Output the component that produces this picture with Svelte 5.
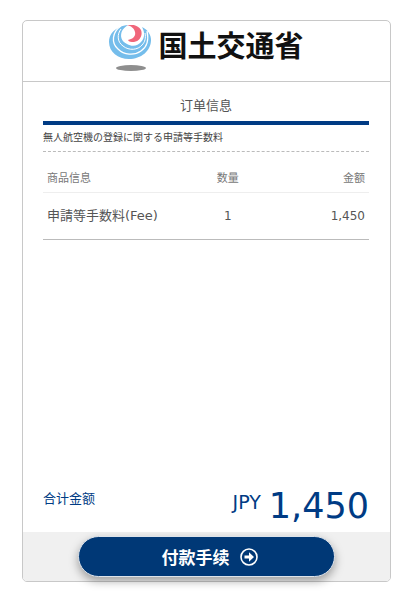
<script>
	let currency = "JPY";
	let subject = "無人航空機の登録に関する申請等手数料";
	let items = [{ name: "申請等手数料(Fee)", quantity: 1, amount: 1450 }];

	let total = items.reduce((sum, item) => sum + item.amount, 0);

	function format(n) {
		return n.toLocaleString("en-US");
	}
</script>

<main class="card">
	<header class="header">
		<svg class="logo" viewBox="0 0 42 47" aria-hidden="true">
			<path
				d="M11 2C4 5 0 10 0 17C0 27 9 34 20 34C32 34 42 26 42 15C42 10 39 5 33 2C36 7 36 13 32 17C29 21 23 22 18 19C12 16 11 11 13 6C14 4 16 2 19 0C16 0 13 1 11 2Z"
				fill="#75bdeb"
			/>
			<path d="M12 1C3 7 2 18 9 24C15 30 25 31 32 26C38 22 40 15 38 6" class="ring" />
			<path d="M12 4C8 9 8 17 14 21C20 26 29 25 33 20C36 17 37 13 36 8" class="ring thin" />
			<path
				d="M18 0C23-1 29 0 32 5C34 10 31 16 25 17C22 17 20 17 19 15C24 14 27 11 26 7C25 3 22 1 18 0Z"
				fill="#f0667a"
			/>
			<ellipse cx="22" cy="43" rx="15" ry="3" fill="#8e8e8e" />
		</svg>
		<span class="ministry">国土交通省</span>
	</header>

	<section class="order">
		<h1>订单信息</h1>
		<p class="subject">{subject}</p>

		<table>
			<thead>
				<tr>
					<th class="name">商品信息</th>
					<th class="quantity">数量</th>
					<th class="amount">金额</th>
				</tr>
			</thead>
			<tbody>
				{#each items as item}
					<tr>
						<td class="name">{item.name}</td>
						<td class="quantity">{item.quantity}</td>
						<td class="amount">{format(item.amount)}</td>
					</tr>
				{/each}
			</tbody>
		</table>

		<div class="total">
			<span class="total-label">合计金额</span>
			<span class="currency">{currency}</span>
			<span class="price">{format(total)}</span>
		</div>
	</section>

	<footer class="footer">
		<button type="button">
			付款手续
			<svg class="arrow" viewBox="0 0 18 18" aria-hidden="true">
				<circle cx="9" cy="9" r="8" fill="none" stroke="#fff" stroke-width="1.6" />
				<path d="M4.5 7.5H9V4.2L14 9L9 13.8V10.5H4.5Z" fill="#fff" />
			</svg>
		</button>
	</footer>
</main>

<style>
	:global(body) {
		background: #fff;
		font-family: "DejaVu Sans", "Noto Sans CJK SC", sans-serif;
	}
	.card {
		display: flex;
		flex-direction: column;
		box-sizing: border-box;
		min-height: calc(100vh - 38px);
		margin: 20px 20px 18px 22px;
		border: 1px solid #c8c8c8;
		border-radius: 5px;
		color: #555;
	}
	.header {
		display: flex;
		justify-content: center;
		gap: 7px;
		height: 61px;
		padding-top: 4px;
		box-sizing: border-box;
		border-bottom: 1px solid #c8c8c8;
	}
	.logo {
		width: 42px;
		height: 47px;
	}
	.ring {
		fill: none;
		stroke: #fff;
		stroke-width: 1.3;
	}
	.thin {
		stroke-width: 1;
	}
	.ministry {
		font-family: "Noto Sans CJK JP", sans-serif;
		font-size: 29px;
		font-weight: 700;
		line-height: 38px;
		color: #111;
	}
	.order {
		display: flex;
		flex-direction: column;
		flex: 1;
		padding: 0 21px 0 20px;
	}
	h1 {
		margin: 0;
		padding-top: 8px;
		border-bottom: 4px solid #003b84;
		font-size: 13px;
		font-weight: 400;
		line-height: 31px;
		text-align: center;
	}
	.subject {
		margin: 0;
		border-bottom: 1px dashed #bbb;
		font-family: "DejaVu Sans", "Noto Sans CJK JP", sans-serif;
		font-size: 10px;
		line-height: 26px;
		color: #444;
	}
	table {
		width: 100%;
		margin-top: 14px;
		border-collapse: collapse;
		table-layout: fixed;
	}
	th {
		padding: 0 4px;
		border-bottom: 1px solid #eee;
		font-size: 11px;
		font-weight: 400;
		line-height: 26px;
		color: #777;
	}
	td {
		padding: 0 4px;
		border-bottom: 1px solid #bbb;
		font-size: 12px;
		line-height: 46px;
	}
	.name {
		width: 45%;
		text-align: left;
	}
	td.name {
		font-family: "DejaVu Sans", "Noto Sans CJK JP", sans-serif;
		font-size: 13px;
	}
	.quantity {
		width: 16%;
		text-align: center;
	}
	.amount {
		text-align: right;
	}
	.total {
		display: flex;
		align-items: flex-start;
		margin-top: auto;
		padding-bottom: 4px;
		color: #003b84;
	}
	.total-label {
		flex: 1;
		font-size: 13px;
		line-height: 30px;
	}
	.currency {
		margin-right: 8px;
		font-size: 19px;
		line-height: 36px;
	}
	.price {
		font-size: 35px;
		line-height: 44px;
	}
	.footer {
		display: flex;
		justify-content: center;
		padding: 4px 55px;
		border-radius: 0 0 4px 4px;
		background: #f0f0f0;
	}
	button {
		display: flex;
		align-items: center;
		justify-content: center;
		gap: 10px;
		flex: 1;
		height: 41px;
		padding: 0 0 0 6px;
		border: 1px solid #dde3ea;
		border-radius: 21px;
		background: #003876;
		box-shadow: 0 4px 10px rgba(0, 0, 0, 0.35);
		font-family: "Noto Sans CJK SC", sans-serif;
		font-size: 17px;
		font-weight: 700;
		color: #fff;
		cursor: pointer;
	}
	.arrow {
		width: 18px;
		height: 18px;
	}
</style>
